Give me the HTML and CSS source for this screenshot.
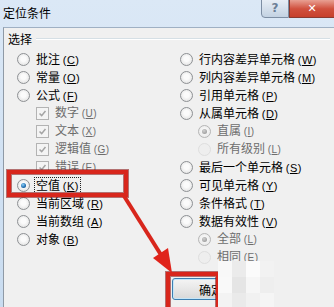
FILE: index.html
```html
<!DOCTYPE html>
<html lang="zh-CN">
<head>
    <meta charset="UTF-8">
    <title>定位条件</title>
    <link rel="stylesheet" href="styles.css">
</head>
<body>
<div class="window">
    <div class="titlebar">
        <span class="title">定位条件</span>
        <div class="caption-btns">
            <span class="cap help">?</span>
            <span class="cap close">&#x2715;</span>
        </div>
    </div>
    <div class="client">
        <div class="group-head"><span class="group-title">选择</span></div>
        <div class="cols">
            <div class="col col-left">
                <div class="row"><span class="radio"></span><span class="label">批注 <span class="key">(<u>C</u>)</span></span></div>
                <div class="row"><span class="radio"></span><span class="label">常量 <span class="key">(<u>O</u>)</span></span></div>
                <div class="row"><span class="radio"></span><span class="label">公式 <span class="key">(<u>F</u>)</span></span></div>
                <div class="row sub"><span class="check"><svg viewBox="0 0 13 13"><path d="M3 6.5 L5.5 9 L10 3.5" /></svg></span><span class="label muted">数字 <span class="key small">(<u>U</u>)</span></span></div>
                <div class="row sub"><span class="check"><svg viewBox="0 0 13 13"><path d="M3 6.5 L5.5 9 L10 3.5" /></svg></span><span class="label muted">文本 <span class="key small">(<u>X</u>)</span></span></div>
                <div class="row sub"><span class="check"><svg viewBox="0 0 13 13"><path d="M3 6.5 L5.5 9 L10 3.5" /></svg></span><span class="label muted">逻辑值 <span class="key small">(<u>G</u>)</span></span></div>
                <div class="row sub"><span class="check"><svg viewBox="0 0 13 13"><path d="M3 6.5 L5.5 9 L10 3.5" /></svg></span><span class="label muted">错误 <span class="key small">(<u>E</u>)</span></span></div>
                <div class="row"><span class="radio on"></span><span class="label focus">空值 <span class="key">(<u>K</u>)</span></span></div>
                <div class="row"><span class="radio"></span><span class="label">当前区域 <span class="key">(<u>R</u>)</span></span></div>
                <div class="row"><span class="radio"></span><span class="label">当前数组 <span class="key">(<u>A</u>)</span></span></div>
                <div class="row"><span class="radio"></span><span class="label">对象 <span class="key">(<u>B</u>)</span></span></div>
            </div>
            <div class="col col-right">
                <div class="row"><span class="radio"></span><span class="label">行内容差异单元格 <span class="key">(<u>W</u>)</span></span></div>
                <div class="row"><span class="radio"></span><span class="label">列内容差异单元格 <span class="key">(<u>M</u>)</span></span></div>
                <div class="row"><span class="radio"></span><span class="label">引用单元格 <span class="key">(<u>P</u>)</span></span></div>
                <div class="row"><span class="radio"></span><span class="label">从属单元格 <span class="key">(<u>D</u>)</span></span></div>
                <div class="row sub-r"><span class="radio dim-on"></span><span class="label muted">直属 <span class="key small">(<u>I</u>)</span></span></div>
                <div class="row sub-r"><span class="radio off"></span><span class="label muted">所有级别 <span class="key small">(<u>L</u>)</span></span></div>
                <div class="row"><span class="radio"></span><span class="label">最后一个单元格 <span class="key">(<u>S</u>)</span></span></div>
                <div class="row"><span class="radio"></span><span class="label">可见单元格 <span class="key">(<u>Y</u>)</span></span></div>
                <div class="row"><span class="radio"></span><span class="label">条件格式 <span class="key">(<u>T</u>)</span></span></div>
                <div class="row"><span class="radio"></span><span class="label">数据有效性 <span class="key">(<u>V</u>)</span></span></div>
                <div class="row sub-r"><span class="radio dim-on"></span><span class="label muted">全部 <span class="key small">(<u>L</u>)</span></span></div>
                <div class="row sub-r"><span class="radio off"></span><span class="label muted">相同 <span class="key small">(<u>E</u>)</span></span></div>
            </div>
        </div>
        <div class="footer">
            <button class="btn">确定</button>
        </div>
    </div>

    <!-- annotations drawn over the screenshot -->
    <div class="mark mark-empty"></div>
    <div class="mark mark-ok"></div>
    <svg class="arrow" width="334" height="307" viewBox="0 0 334 307">
        <line x1="124" y1="196" x2="163" y2="258" />
        <polygon points="172,273 153,258 168,248" />
    </svg>
    <div class="mosaic">
        <span style="background:#f8f8f8"></span><span style="background:#ebebeb"></span><span style="background:#fbfbfb"></span><span style="background:#f2f2f2"></span>
        <span style="background:#f9f9f9"></span><span style="background:#e5e5e5"></span><span style="background:#f6f6f6"></span><span style="background:#eeeeee"></span>
        <span style="background:#f3f3f3"></span><span style="background:#eaeaea"></span><span style="background:#f1f1f1"></span><span style="background:#f5f5f5"></span>
    </div>
</div>
</body>
</html>
```

FILE: styles.css
```css
body {
  margin: 0;
  padding: 0;
  font-family: "Noto Sans CJK SC", "Noto Sans", sans-serif;
  font-size: 12px;
  color: #000;
  background-color: #f0f0f0;
}

.window {
  position: relative;
  width: 334px;
  height: 307px;
  overflow: hidden;
  background: linear-gradient(#dbe8f6, #c9dcf0);
}

.titlebar {
  height: 27px;
  display: flex;
  align-items: flex-start;
  justify-content: space-between;
}

.title {
  padding-left: 3px;
  line-height: 25px;
  font-size: 12px;
}

.caption-btns {
  display: flex;
  margin-top: -2px;
}

.cap {
  height: 18px;
  display: flex;
  align-items: center;
  justify-content: center;
  font-family: "DejaVu Sans", sans-serif;
  font-weight: bold;
}

.help {
  width: 26px;
  border: 1px solid #7d8ea3;
  border-radius: 0 0 0 4px;
  background: linear-gradient(#e9eff6, #c3d2e2);
  color: #6c7f96;
  font-size: 12px;
}

.close {
  width: 44px;
  border: 1px solid #8a3a30;
  border-right: none;
  background: linear-gradient(#eba99c, #d0503d 55%, #c7402c);
  color: #fff;
  font-size: 11px;
}

.client {
  margin-left: 3px;
  height: 280px;
  border-top: 1px solid #9fb0c3;
  border-left: 1px solid #8f9aa6;
  background-color: #f0f0f0;
}

.group-head {
  display: flex;
  align-items: center;
  height: 16px;
  margin-top: 3px;
  margin-right: 4px;
}

.group-title {
  padding-left: 4px;
  padding-right: 4px;
  line-height: 16px;
}

.group-head::after {
  content: "";
  flex: 1;
  border-top: 1px solid #d5dfe5;
  border-bottom: 1px solid #fff;
}

.cols {
  display: flex;
  margin-top: 3px;
}

.col-left {
  width: 163px;
  padding-left: 13px;
}

.row {
  display: flex;
  align-items: center;
  height: 18px;
  white-space: nowrap;
}

.row.sub {
  padding-left: 19px;
}

.row.sub-r {
  padding-left: 18px;
}

.label {
  margin-left: 4px;
  line-height: 14px;
  padding: 0 1px;
  border: 1px solid transparent;
}

.label.muted {
  color: #6d6d6d;
}

.label.focus {
  border: 1px dotted #222;
}

.key {
  font-family: "Liberation Sans", sans-serif;
  font-size: 11px;
  letter-spacing: 0.5px;
}

.key.small {
  font-size: 10px;
}

.radio {
  box-sizing: border-box;
  width: 13px;
  height: 13px;
  border-radius: 50%;
  border: 1px solid #8e9194;
  background: radial-gradient(circle at 50% 45%, #fbfbfb 0 30%, #dadada 100%);
  position: relative;
  flex: none;
}

.radio.on::after,
.radio.dim-on::after {
  content: "";
  position: absolute;
  left: 3px;
  top: 3px;
  width: 5px;
  height: 5px;
  border-radius: 50%;
}

.radio.on::after {
  background: radial-gradient(circle at 40% 35%, #8fd0f8, #1f6db0 60%, #0b3a66);
}

.radio.dim-on {
  border-color: #b5b5b5;
  background: radial-gradient(circle at 50% 45%, #f6f6f6 0 30%, #e4e4e4 100%);
}

.radio.dim-on::after {
  background: radial-gradient(circle at 40% 35%, #d0d0d0, #8e8e8e);
}

.radio.off {
  border-color: #dedede;
  background: #eeeeee;
}

.check {
  box-sizing: border-box;
  width: 13px;
  height: 13px;
  border: 1px solid #b3b3b3;
  background: #f4f4f4;
  flex: none;
  display: flex;
}

.check svg {
  width: 11px;
  height: 11px;
}

.check path {
  fill: none;
  stroke: #a4a4a4;
  stroke-width: 1.8;
}

.footer {
  display: flex;
  padding-left: 168px;
  margin-top: 12px;
}

.btn {
  width: 76px;
  height: 22px;
  padding: 0 0 0 2px;
  font-family: "Noto Sans CJK SC", sans-serif;
  font-size: 12px;
  border: 1px solid #3c7fb1;
  border-radius: 3px;
  background: linear-gradient(#f4f4f4, #e7e7e7 50%, #d8d8d8);
  box-shadow: inset 0 0 0 1px #c6e6f8;
  color: #000;
}

.mark {
  position: absolute;
  box-sizing: border-box;
  border: 4px solid #d8261c;
  box-shadow: 0 0 0 1px rgba(130, 10, 10, 0.55), inset 0 0 0 1px rgba(130, 10, 10, 0.55);
}

.mark-empty {
  left: 7px;
  top: 170px;
  width: 121px;
  height: 27px;
}

.mark-ok {
  left: 166px;
  top: 272px;
  width: 54px;
  height: 44px;
}

.arrow {
  position: absolute;
  left: 0;
  top: 0;
}

.arrow line {
  stroke: #d8261c;
  stroke-width: 4;
}

.arrow polygon {
  fill: #e0231a;
}

.mosaic {
  position: absolute;
  left: 218px;
  top: 261px;
  display: grid;
  grid-template-columns: repeat(4, 14px);
  grid-auto-rows: 16px;
}
```
